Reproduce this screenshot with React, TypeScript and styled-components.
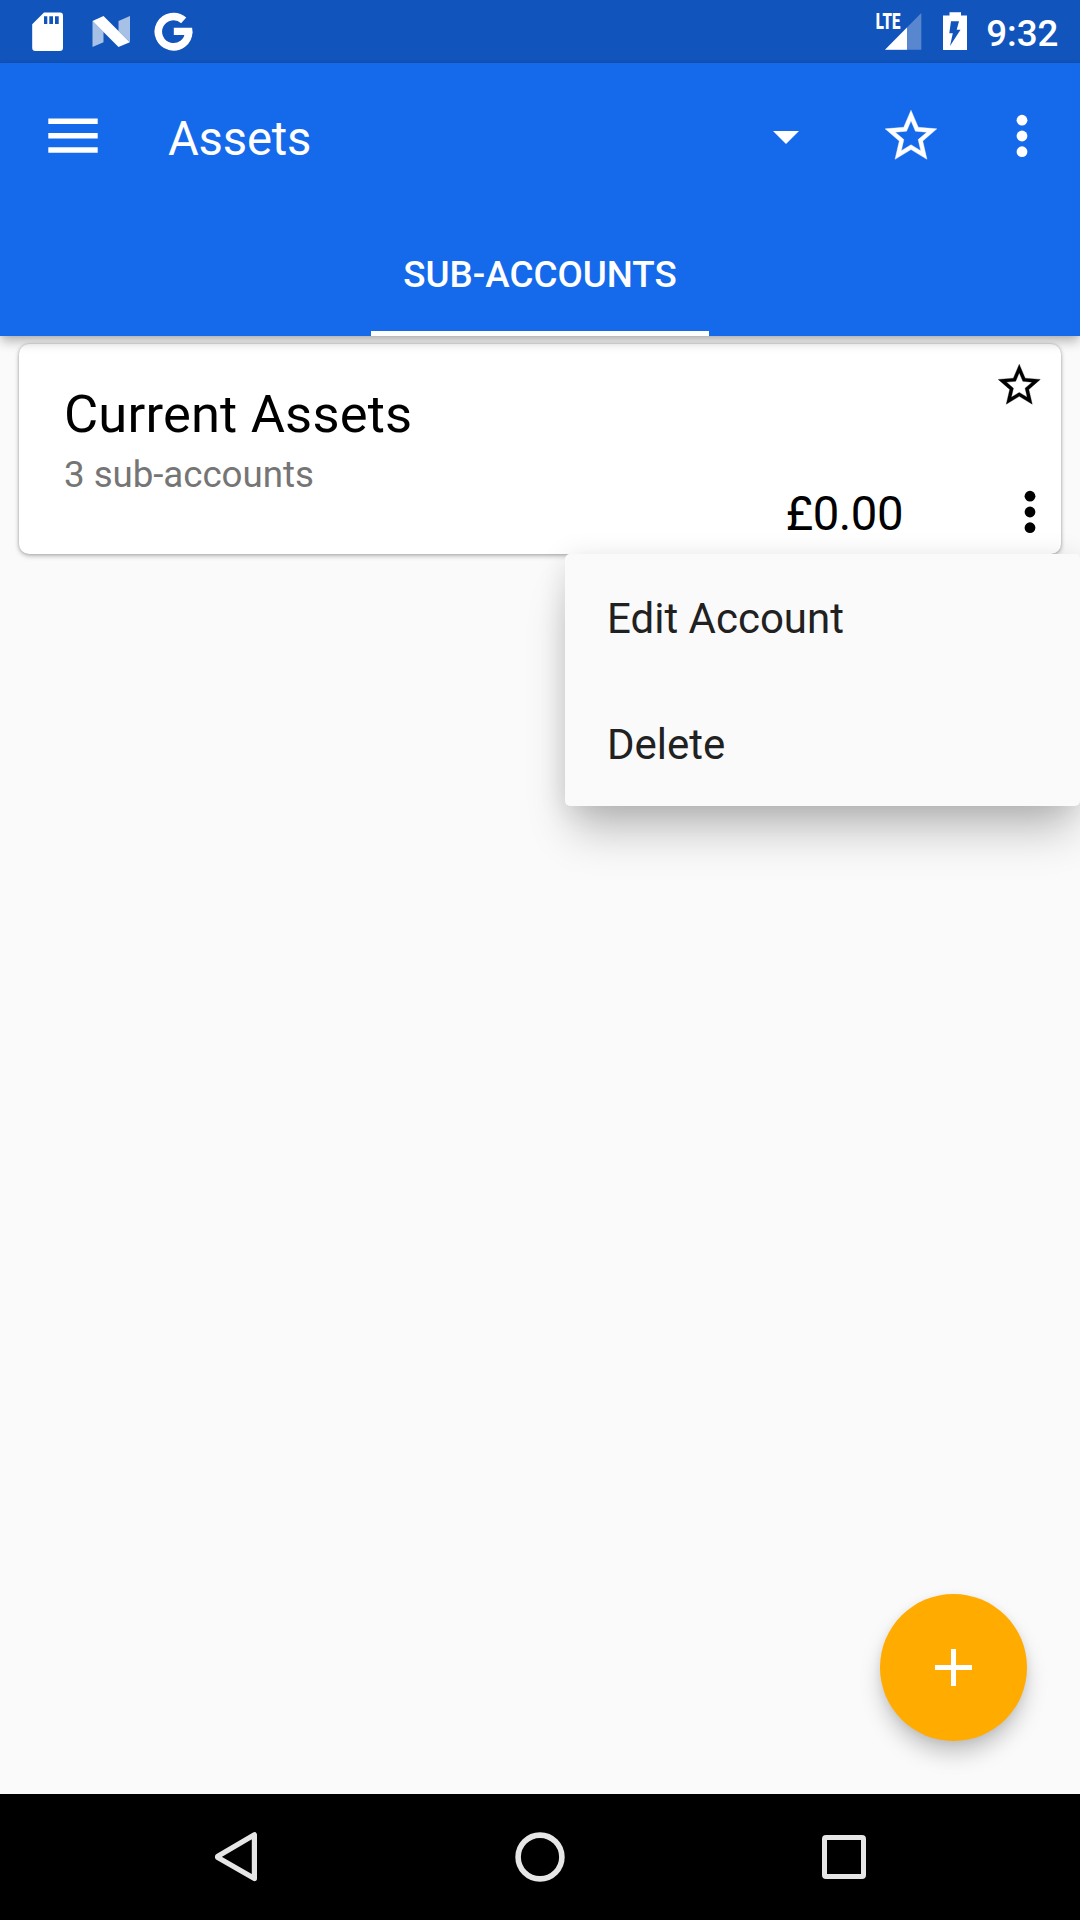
import React from 'react';
import styled, { createGlobalStyle } from 'styled-components';

const GlobalStyle = createGlobalStyle`
  * { box-sizing: border-box; }
  body { margin: 0; background: #fafafa; }
  button { border: 0; padding: 0; background: none; font: inherit; color: inherit; text-align: left; }
  svg { display: block; flex: none; }
`;

const Screen = styled.div`
  display: flex;
  flex-direction: column;
  width: 1080px;
  height: 1920px;
  overflow: hidden;
  background: #fafafa;
  font-family: Roboto, sans-serif;
`;

const StatusBar = styled.header`
  flex: none;
  display: flex;
  justify-content: space-between;
  height: 63px;
  padding: 0 21.5px 0 32px;
  background: #1154bc;
  color: #fff;
`;

const StatusGroup = styled.div<{ $gap: number }>`
  display: flex;
  gap: ${(p) => p.$gap}px;
`;

const Clock = styled.span`
  margin-left: -2px;
  padding-top: 4px;
  font-size: 36.75px;
  font-weight: 500;
  line-height: 59px;
`;

const AppBar = styled.div`
  flex: none;
  z-index: 2;
  height: 273px;
  background: #1569eb;
  color: #fff;
  box-shadow: 0 7px 10px -1px rgba(0, 0, 0, 0.25), 0 0 4px rgba(0, 0, 0, 0.1);
`;

const Toolbar = styled.div`
  display: flex;
  align-items: center;
  height: 147px;
  padding: 0 51.8px 0 48px;
`;

const Title = styled.h1`
  flex: 1;
  margin: 0 0 0 70px;
  padding-top: 5px;
  font-size: 47.25px;
  font-weight: 400;
  line-height: 56px;
  letter-spacing: -0.2px;
`;

const Actions = styled.div`
  display: flex;
  align-items: center;
`;

const IconButton = styled.button<{ $ml?: number; $mt?: number }>`
  display: flex;
  margin-left: ${(p) => p.$ml ?? 0}px;
  margin-top: ${(p) => p.$mt ?? 0}px;
`;

const Tabs = styled.nav`
  display: flex;
  justify-content: center;
  height: 126px;
`;

const Tab = styled.button`
  width: 338px;
  padding-top: 8px;
  border-bottom: 5px solid #fff;
  font-size: 36.75px;
  font-weight: 500;
  line-height: 113px;
  text-align: center;
  white-space: nowrap;
`;

const Content = styled.main`
  flex: 1;
  position: relative;
  padding: 8px 19px;
`;

const Card = styled.article`
  display: flex;
  justify-content: space-between;
  height: 210px;
  border-radius: 10px;
  background: #fff;
  color: #000;
  box-shadow: 0 2px 5px rgba(0, 0, 0, 0.26), 0 0 3px rgba(0, 0, 0, 0.2);
`;

const CardText = styled.div`
  display: flex;
  flex-direction: column;
  gap: 8px;
  padding: 39px 0 0 45px;
`;

const AccountName = styled.h2`
  margin: 0;
  font-size: 52.5px;
  font-weight: 400;
  line-height: 62px;
  letter-spacing: 0.18px;
`;

const AccountInfo = styled.p`
  margin: 0;
  color: #757575;
  font-size: 36.75px;
  line-height: 44px;
  letter-spacing: -0.07px;
`;

const CardSide = styled.div`
  display: flex;
  flex-direction: column;
  align-items: flex-end;
  justify-content: space-between;
  padding: 16px 16.5px 12px 0;
`;

const BalanceRow = styled.div`
  display: flex;
  align-items: center;
  gap: 121px;
  padding-right: 8.5px;
`;

const Balance = styled.span`
  font-size: 47.25px;
  line-height: 56px;
  letter-spacing: -0.45px;
`;

const Menu = styled.div`
  position: absolute;
  top: 218px;
  right: 0;
  width: 515px;
  border-radius: 5px;
  background: #fafafa;
  box-shadow: 0 32px 42px -8px rgba(0, 0, 0, 0.24), 0 3px 28px rgba(0, 0, 0, 0.11);
`;

const MenuItem = styled.button`
  display: block;
  width: 100%;
  height: 126px;
  padding: 3px 42px 0;
  color: #212121;
  font-size: 42px;
  line-height: 123px;
`;

const Fab = styled.button`
  position: absolute;
  right: 53px;
  bottom: 53px;
  display: flex;
  align-items: center;
  justify-content: center;
  width: 147px;
  height: 147px;
  border-radius: 50%;
  background: #ffab00;
  box-shadow: 0 14px 22px -2px rgba(0, 0, 0, 0.22), 0 2px 10px rgba(0, 0, 0, 0.07);
`;

const NavBar = styled.footer`
  flex: none;
  z-index: 3;
  display: flex;
  align-items: center;
  justify-content: space-between;
  height: 126px;
  padding: 0 214px;
  background: #000;
`;

const SdCardIcon = () => (
  <svg width="31" height="63" viewBox="32 0 31 63" fill="#fff">
    <path fillRule="evenodd" d="M44 12.5H60Q63 12.5 63 15.7V47.8Q63 51 59.8 51H35.4Q32.2 51 32.2 47.8V24.3ZM44 16.3V24H47.3V16.3ZM49.3 16.3V24H53V16.3ZM55 16.3V24H58.7V16.3Z" />
  </svg>
);

const NougatIcon = () => (
  <svg width="47.5" height="63" viewBox="84.5 0 47.5 63" fill="#fff">
    <path opacity=".63" d="M92 21L103 32V42.3L92 47ZM118 21L129.5 16V42.3L118 31Z" />
    <path d="M92 21L103 16L129.3 42.3L118 47Z" />
  </svg>
);

const GoogleIcon = () => (
  <svg width="40" height="63" viewBox="153.5 0 40 63">
    <path d="M183.2 20.4A15.2 15.2 0 1 0 188.2 31.7" fill="none" stroke="#fff" strokeWidth="7.6" />
    <path d="M173.3 27.7H191.6L192 31.7L191.4 35H173.3Z" fill="#fff" />
  </svg>
);

const SignalIcon = () => (
  <svg width="46" height="63" viewBox="876 0 46 63" fill="#fff">
    <path opacity=".3" d="M885 49.7L921.3 13V49.7Z" />
    <path d="M885 49.7L907 27.5V49.7Z" />
    <text x="875.8" y="29" fontSize="22" fontWeight="900" textLength="24.5" lengthAdjust="spacingAndGlyphs">LTE</text>
  </svg>
);

const BatteryIcon = () => (
  <svg width="24" height="63" viewBox="943 0 24 63" fill="#fff">
    <path fillRule="evenodd" d="M949.5 12.3H961V15.5H967V50H943V15.5H949.5ZM951 21.3L949.3 33.3H952.8L950 46L960.5 29.7H956.7L959 21.3Z" />
  </svg>
);

const HamburgerIcon = () => (
  <svg width="50" height="36" viewBox="48 118 50 36" fill="#fff">
    <path d="M48.3 118.6H97.7V124.1H48.3ZM48.3 133H97.7V138.5H48.3ZM48.3 147.2H97.7V152.7H48.3Z" />
  </svg>
);

const CaretIcon = () => (
  <svg width="26" height="13" viewBox="0 0 26 13" fill="#fff">
    <path d="M0 0H26L13 13Z" />
  </svg>
);

const StarIcon = ({ size }: { size: number }) => (
  <svg width={size} height={size} viewBox="0 0 24 24" fill="currentColor" stroke="currentColor" strokeWidth="0.15">
    <path d="M22 9.24l-7.19-.62L12 2 9.19 8.63 2 9.24l5.46 4.73L5.82 21 12 17.27 18.18 21l-1.63-7.03L22 9.24zM12 15.4l-3.76 2.27 1-4.28-3.32-2.88 4.38-.38L12 6.1l1.71 4.04 4.38.38-3.32 2.88 1 4.28L12 15.4z" />
  </svg>
);

const MoreIcon = () => (
  <svg width="12" height="44" viewBox="0 0 12 44" fill="currentColor">
    <circle cx="6" cy="6.2" r="5.4" />
    <circle cx="6" cy="22" r="5.4" />
    <circle cx="6" cy="37.7" r="5.4" />
  </svg>
);

const PlusIcon = () => (
  <svg width="37" height="37" viewBox="0 0 37 37" fill="#fff">
    <path d="M16 0H21V16H37V21H21V37H16V21H0V16H16Z" />
  </svg>
);

const BackIcon = () => (
  <svg width="44" height="52" viewBox="214 1831 44 52">
    <path d="M254.4 1834.8V1878.6L217.8 1857.6Q217.3 1857 217.8 1856.2Z" fill="none" stroke="#e6e6e6" strokeWidth="5.2" strokeLinejoin="round" />
  </svg>
);

const HomeIcon = () => (
  <svg width="52" height="52" viewBox="0 0 52 52">
    <circle cx="26" cy="26" r="21.9" fill="none" stroke="#e6e6e6" strokeWidth="5.6" />
  </svg>
);

const RecentIcon = () => (
  <svg width="44" height="44" viewBox="0 0 44 44">
    <rect x="2.5" y="2.5" width="39" height="39" rx="1.5" fill="none" stroke="#e6e6e6" strokeWidth="5" />
  </svg>
);

export default function App() {
  return (
    <Screen>
      <GlobalStyle />
      <StatusBar>
        <StatusGroup $gap={21.5}>
          <SdCardIcon />
          <NougatIcon />
          <GoogleIcon />
        </StatusGroup>
        <StatusGroup $gap={21}>
          <SignalIcon />
          <BatteryIcon />
          <Clock>9:32</Clock>
        </StatusGroup>
      </StatusBar>

      <AppBar>
        <Toolbar>
          <IconButton aria-label="Open navigation" $mt={-1}><HamburgerIcon /></IconButton>
          <Title>Assets</Title>
          <Actions>
            <IconButton aria-label="Choose account" $mt={2}><CaretIcon /></IconButton>
            <IconButton aria-label="Favorite" $ml={81} $mt={-1.4}><StarIcon size={62} /></IconButton>
            <IconButton aria-label="More options" $ml={74}><MoreIcon /></IconButton>
          </Actions>
        </Toolbar>
        <Tabs>
          <Tab>SUB-ACCOUNTS</Tab>
        </Tabs>
      </AppBar>

      <Content>
        <Card>
          <CardText>
            <AccountName>Current Assets</AccountName>
            <AccountInfo>3 sub-accounts</AccountInfo>
          </CardText>
          <CardSide>
            <IconButton aria-label="Favorite account"><StarIcon size={50.5} /></IconButton>
            <BalanceRow>
              <Balance>£0.00</Balance>
              <IconButton aria-label="Account options" $mt={-4}><MoreIcon /></IconButton>
            </BalanceRow>
          </CardSide>
        </Card>
        <Menu role="menu">
          <MenuItem role="menuitem">Edit Account</MenuItem>
          <MenuItem role="menuitem">Delete</MenuItem>
        </Menu>
        <Fab aria-label="Add account"><PlusIcon /></Fab>
      </Content>

      <NavBar>
        <BackIcon />
        <HomeIcon />
        <RecentIcon />
      </NavBar>
    </Screen>
  );
}
